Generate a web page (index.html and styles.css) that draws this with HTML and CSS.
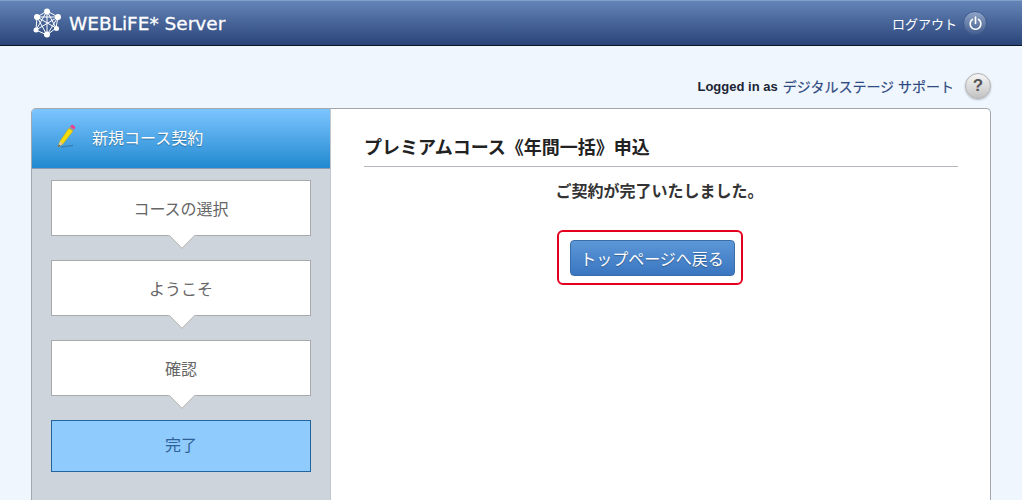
FILE: index.html
```html
<!DOCTYPE html>
<html lang="ja">
<head>
<meta charset="utf-8">
<title>WEBLiFE* Server</title>
<link rel="stylesheet" href="styles.css">
</head>
<body>
<header class="topbar">
  <div class="brand">
    <svg class="brand-icon" width="30" height="30" viewBox="0 0 30 30" fill="none" stroke="#fff" stroke-width="1">
      <path d="M15 3 L26 9 L24 20 L15 27 L4 22 L5 9 Z M15 3 L15 27 M15 3 L4 22 M15 3 L24 20 M5 9 L24 20 M5 9 L15 27 M26 9 L4 22 M26 9 L15 27 M5 9 L26 9"/>
      <g fill="#fff" stroke="none">
        <circle cx="15" cy="3.500" r="3"/><circle cx="26" cy="9" r="3"/><circle cx="24.500" cy="20.500" r="2.500"/>
        <circle cx="15" cy="26.500" r="3"/><circle cx="4" cy="22" r="2.500"/><circle cx="5" cy="9" r="3"/>
      </g>
    </svg>
    <span class="brand-name">WEBLiFE* Server</span>
  </div>
  <div class="logout">
    <span>ログアウト</span>
    <span class="power">
      <svg width="15" height="15" viewBox="0 0 14 14" fill="none" stroke="#fff" stroke-width="1.500" stroke-linecap="round">
        <path d="M4.200 3.200 A5 5 0 1 0 9.800 3.200"/><path d="M7 1 V7"/>
      </svg>
    </span>
  </div>
</header>

<div class="userline">
  <span class="logged">Logged in as</span>
  <a class="username">デジタルステージ サポート</a>
  <span class="help">?</span>
</div>

<main class="panel">
  <aside class="sidebar">
    <div class="side-head">
      <svg class="pencil" width="22" height="26" viewBox="0 0 22 26">
        <path d="M4 23 L16 21.500" stroke="#3a6f9c" stroke-width="1.500" opacity=".6"/>
        <path d="M1 23 L3 17 L12 4 L16 7 L6 20 Z" fill="#f4dc0a" stroke="#b59a10" stroke-width=".5"/>
        <path d="M1 23 L3 17 L6 20 Z" fill="#d8c9a0"/>
        <path d="M1 23 L1.800 20.800 L3.200 21.800 Z" fill="#333"/>
        <path d="M12 4 L16 7 L17.200 5.400 L13.200 2.400 Z" fill="#9a9a9a"/>
        <path d="M13.200 2.400 L17.200 5.400 L18.500 3 L15 0.600 Z" fill="#ee3f8d"/>
      </svg>
      <span>新規コース契約</span>
    </div>
    <ol class="steps">
      <li class="step">コースの選択</li>
      <li class="step">ようこそ</li>
      <li class="step">確認</li>
      <li class="step step-current">完了</li>
    </ol>
  </aside>
  <section class="content">
    <h1 class="title">プレミアムコース《年間一括》申込</h1>
    <p class="message">ご契約が完了いたしました。</p>
    <div class="action">
      <div class="highlight"><a class="button">トップページへ戻る</a></div>
    </div>
  </section>
</main>
</body>
</html>
```

FILE: styles.css
```css
* { box-sizing: border-box; }
html, body { margin: 0; height: 500px; overflow: hidden; }
body {
  background: #eff6fe;
  font-family: "Liberation Sans", "Noto Sans CJK JP", sans-serif;
  color: #222;
}
.topbar {
  height: 46px;
  padding: 0 35px 0 32px;
  display: flex;
  align-items: center;
  justify-content: space-between;
  background: linear-gradient(#6484b8, #2a4478);
  border-top: 1px solid #7fa0c8;
  border-bottom: 1px solid #0c1526;
  color: #fff;
}
.brand { display: flex; align-items: center; gap: 7px; }
.brand-name { font: 18.500px "DejaVu Sans", sans-serif; -webkit-text-stroke: .3px #fff; }
.logout { display: flex; align-items: center; gap: 6px; font-size: 13px; }
.power {
  width: 24px; height: 24px; border-radius: 50%;
  display: flex; align-items: center; justify-content: center;
  background: linear-gradient(#8ea3c6, #465f90);
  border: 1px solid #3f5a8c;
}
.userline {
  height: 62px;
  padding: 18px 31px 0 0;
  display: flex;
  align-items: center;
  justify-content: flex-end;
}
.logged { font-size: 13px; font-weight: bold; color: #1c2433; margin-right: 5px; }
.username { color: #2f4a80; font-size: 14px; -webkit-text-stroke: .2px #2f4a80; }
.help {
  margin-left: 11px;
  width: 26px; height: 26px; border-radius: 50%;
  display: flex; align-items: center; justify-content: center;
  background: linear-gradient(#f6f6f6, #c2c2c2);
  border: 1px solid #b0b0b0;
  box-shadow: 0 1px 2px rgba(0,0,0,.25);
  font: bold 17px "Liberation Sans", sans-serif;
  color: #555;
}
.panel {
  margin: 0 31px;
  height: 392px;
  display: flex;
  background: #fff;
  border: 1px solid #a4a8ad;
  border-bottom: 0;
  border-radius: 5px 5px 0 0;
  overflow: hidden;
}
.sidebar {
  width: 299px;
  flex: none;
  background: #cdd4dc;
  border-right: 1px solid #c0c6ce;
}
.side-head {
  height: 60px;
  padding: 0 0 3px 25px;
  display: flex;
  align-items: center;
  gap: 13px;
  background: linear-gradient(#7dc5ff, #2189d0);
  border-bottom: 1px solid #8a9caf;
  color: #fff;
  font-size: 16px;
  text-shadow: 0 1px 1px rgba(0,0,0,.3);
}
.steps { list-style: none; margin: 0; padding: 11px 0 0 19px; }
.step {
  position: relative;
  width: 260px;
  height: 56px;
  margin-bottom: 24px;
  display: flex;
  align-items: center;
  justify-content: center;
  background: #fff;
  border: 1px solid #a8a8a8;
  color: #666;
  font-size: 16px;
}
.step::after {
  content: "";
  position: absolute;
  left: 50%;
  bottom: -10px;
  width: 19px;
  height: 19px;
  margin-left: -9.500px;
  background: #fff;
  border-right: 1px solid #a8a8a8;
  border-bottom: 1px solid #a8a8a8;
  transform: rotate(45deg);
  clip-path: polygon(100% 0, 100% 100%, 0 100%);
}
.step-current {
  height: 52px;
  padding-bottom: 4px;
  background: #90cbfd;
  border-color: #22649f;
  color: #2f6299;
}
.step-current::after { display: none; }
.content { flex: 1; padding: 23px 32px 0 33px; }
.title {
  margin: 0;
  height: 35px;
  border-bottom: 1px solid #b4b8bc;
  font-size: 18px;
  font-weight: bold;
  line-height: 33px;
  color: #222;
}
.message {
  margin: 13px 0 0;
  text-align: center;
  font-size: 16px;
  line-height: 24px;
  font-weight: bold;
  color: #333;
  padding-right: 3px;
}
.action { margin-top: 26px; display: flex; justify-content: center; padding-right: 23px; }
.highlight {
  width: 186px;
  height: 55px;
  padding-left: 5px;
  display: flex;
  align-items: center;
  justify-content: center;
  border: 2px solid #e60020;
  border-radius: 6px;
}
.button {
  width: 165px;
  height: 36px;
  display: flex;
  align-items: center;
  justify-content: center;
  background: linear-gradient(#5c97d8, #3a76c0);
  border: 1px solid #3a6ea8;
  border-radius: 4px;
  color: #fff;
  font-size: 16px;
  text-shadow: 0 1px 1px rgba(0,0,0,.3);
}
```
